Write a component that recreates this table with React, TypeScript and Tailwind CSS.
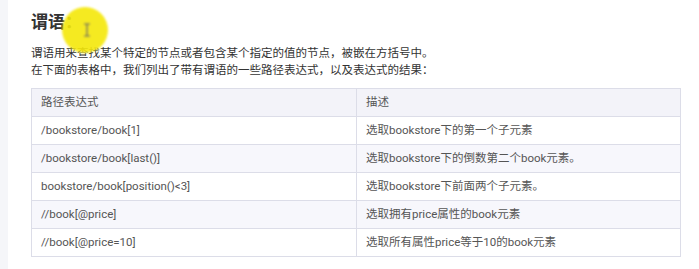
import React from "react";

const rows: [string, string][] = [
    ["/bookstore/book[1]", "选取bookstore下的第一个子元素"],
    ["/bookstore/book[last()]", "选取bookstore下的倒数第二个book元素。"],
    ["bookstore/book[position()<3]", "选取bookstore下前面两个子元素。"],
    ["//book[@price]", "选取拥有price属性的book元素"],
    ["//book[@price=10]", "选取所有属性price等于10的book元素"],
];

const font = { fontFamily: "Roboto, 'Noto Sans CJK SC', sans-serif" };

const App: React.FC = () => {
    return (
        <div className="w-[699px] h-[269px] bg-white flex overflow-hidden relative" style={font}>
            <div className="w-[8px] bg-[#f5f6f9]" />
            <div className="flex-1 pl-[23px] pt-[10px]">
                <h2 className="text-[17px] font-bold text-[#333] leading-[24px]">谓语：</h2>
                <div className="mt-[11px] text-[11.5px] text-[#333] leading-[17px]">
                    <p>谓语用来查找某个特定的节点或者包含某个指定的值的节点，被嵌在方括号中。</p>
                    <p>在下面的表格中，我们列出了带有谓语的一些路径表达式，以及表达式的结果：</p>
                </div>
                <table className="mt-[9px] w-[650px] border-collapse border border-[#dcdde8] text-[11.5px] text-[#555]">
                    <thead>
                        <tr className="bg-[#f3f3f9]">
                            <th className="w-[325px] h-[28px] border border-[#dcdde8] px-[9px] text-left font-normal">路径表达式</th>
                            <th className="h-[28px] border border-[#dcdde8] px-[9px] text-left font-normal">描述</th>
                        </tr>
                    </thead>
                    <tbody>
                        {rows.map(([path, desc], i) => (
                            <tr key={path} className={i % 2 === 1 ? "bg-[#f7f7fc]" : "bg-white"}>
                                <td className="h-[28px] border border-[#dcdde8] px-[9px]">{path}</td>
                                <td className="h-[28px] border border-[#dcdde8] px-[9px]">{desc}</td>
                            </tr>
                        ))}
                    </tbody>
                </table>
            </div>

            {/* cursor highlight */}
            <div className="absolute left-[62px] top-[7px] w-[46px] h-[46px] rounded-full bg-[#f5e80a] opacity-90 blur-[1px] flex items-center justify-center">
                <svg width="8" height="14" viewBox="0 0 8 14" className="ml-[4px]">
                    <path d="M1 1h6M4 1v12M1 13h6" stroke="#555" strokeWidth="1.2" fill="none" />
                </svg>
            </div>
        </div>
    );
};

export default App;
